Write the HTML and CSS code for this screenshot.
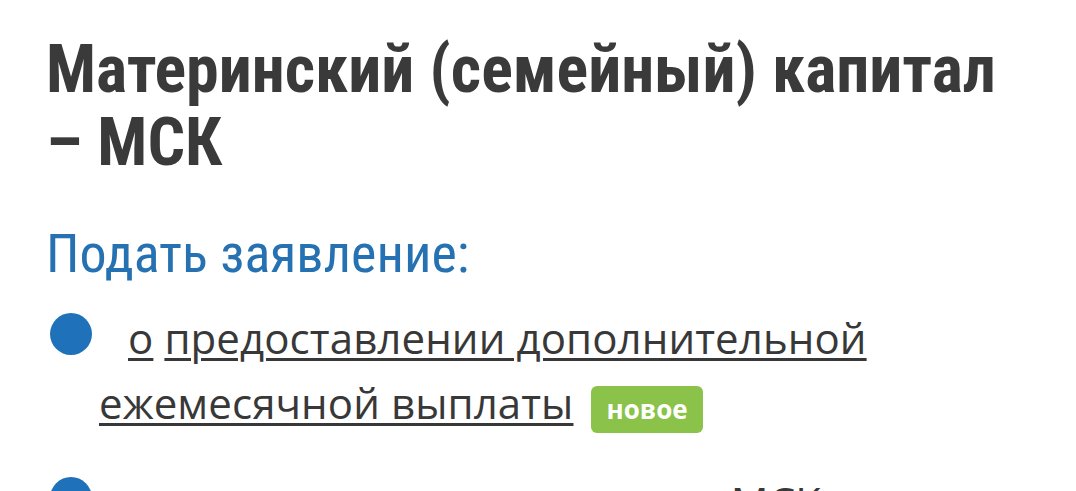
FILE: index.html
```html
<!DOCTYPE html>
<html lang="ru">
<head>
<meta charset="utf-8">
<title>Материнский (семейный) капитал – МСК</title>
<link rel="stylesheet" href="styles.css">
</head>
<body>
<main class="page">
  <h1 class="title">Материнский (семейный) капитал – МСК</h1>
  <h2 class="subtitle">Подать заявление:</h2>
  <ul class="apps">
    <li class="app"><a class="link" href="#">о</a> <a class="link" href="#">предоставлении дополнительной ежемесячной выплаты</a> <span class="badge">новое</span></li>
    <li class="app"><a class="link" href="#">о распоряжении средствами МСК</a></li>
  </ul>
</main>
</body>
</html>
```
FILE: styles.css
```css
html, body {
  margin: 0;
  padding: 0;
  background: #ffffff;
}
.page {
  padding: 33px 45px 0 46px;
  overflow: hidden;
  height: 491px;
  box-sizing: border-box;
}
.title {
  margin: 0;
  font-family: "Roboto Condensed", Roboto, sans-serif;
  font-stretch: 75%;
  font-weight: 700;
  font-size: 66px;
  line-height: 73px;
  color: #3a3a3a;
}
.subtitle {
  margin: 43px 0 0 0;
  font-family: "Roboto Condensed", Roboto, sans-serif;
  font-stretch: 75%;
  font-weight: 400;
  font-size: 54px;
  line-height: 64px;
  color: #2571b2;
}
.apps {
  list-style: none;
  margin: 19px 0 0 0;
  padding: 0 0 0 53px;
}
.app {
  position: relative;
  font-family: "Open Sans", sans-serif;
  font-size: 42px;
  letter-spacing: 0.1px;
  line-height: 65px;
  color: #383838;
  text-indent: 29px;
}
.app + .app {
  margin-top: 34px;
}
.app::before {
  content: "";
  position: absolute;
  left: -49px;
  top: 8px;
  width: 42px;
  height: 42px;
  border-radius: 50%;
  background: #1f72b9;
}
.link {
  color: #383838;
  text-decoration: underline;
  text-decoration-thickness: 3px;
  text-underline-offset: 4px;
}
.badge {
  display: inline-block;
  text-indent: 0;
  margin-left: 7px;
  padding: 5px 15px 6px;
  border-radius: 6px;
  background: #8bc34a;
  color: #ffffff;
  font-family: "Open Sans", sans-serif;
  font-weight: 700;
  font-size: 26px;
  letter-spacing: 0;
  line-height: normal;
}
```
